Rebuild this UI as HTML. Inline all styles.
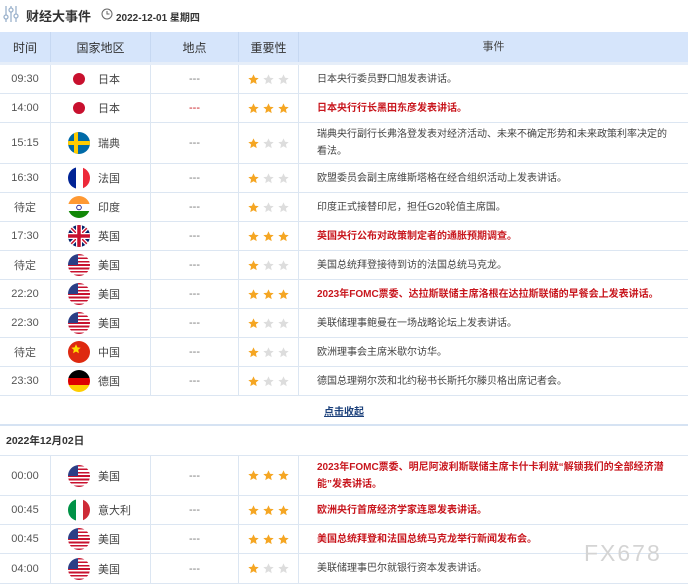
<!DOCTYPE html>
<html><head><meta charset="utf-8"><style>
*{margin:0;padding:0;box-sizing:border-box}
body{width:688px;height:584px;overflow:hidden;background:#fff;font-family:"Liberation Sans","Noto Sans CJK SC",sans-serif;color:#444;position:relative}
.top{position:absolute;left:0;top:0;width:688px;height:32px}
.title{position:absolute;left:26px;top:6px;font-size:13px;font-weight:bold;color:#333}
.date{position:absolute;left:116px;top:9px;font-size:10px;font-weight:bold;color:#333}
.r{position:absolute;left:0;width:688px;border-bottom:1px solid #dce6f2;font-size:11px}
.r>div{position:absolute;top:0;height:100%;display:flex;align-items:center}
.c1{left:0;width:50px;justify-content:center;color:#555}
.c2{left:50px;width:100px;border-left:1px solid #dce6f2}
.c3{left:150px;width:88px;justify-content:center;border-left:1px solid #dce6f2;color:#777}
.c4{left:238px;width:60px;justify-content:center;border-left:1px solid #dce6f2}
.c4 svg{margin:0 2px}
.c5{left:298px;width:390px;border-left:1px solid #dce6f2;padding-left:18px;padding-right:14px;font-size:10px;line-height:17px;color:#444}
.red{color:#c8161d!important;font-weight:bold}
.flag{width:22px;height:22px;border-radius:50%;overflow:hidden;margin-left:17px;margin-right:8px;flex:none}
.hd{background:#d6e5fb;border-bottom:3px solid #e6eef9;color:#333;font-size:12px}
.hd>div{border-left-color:#c6d8f2!important;justify-content:center!important;padding:0!important}
.us{background:linear-gradient(#2b3e86,#2b3e86) 0 0/10px 11px no-repeat,repeating-linear-gradient(#c8102e 0 1.7px,#fff 1.7px 3.4px)}
</style></head><body>
<svg width="0" height="0" style="position:absolute"><defs><path id="st" d="M5 0.3L6.4 3.4L9.7 3.7L7.2 5.9L7.9 9.2L5 7.5L2.1 9.2L2.8 5.9L0.3 3.7L3.6 3.4Z"/></defs></svg>
<div class="top">
<svg style="position:absolute;left:3px;top:5px" width="16" height="18" viewBox="0 0 16 18" fill="none" stroke="#9bb2cc" stroke-width="1.3"><line x1="3" y1="1" x2="3" y2="17"/><line x1="8" y1="1" x2="8" y2="17"/><line x1="13" y1="1" x2="13" y2="17"/><circle cx="3" cy="12" r="2" fill="#fff"/><circle cx="8" cy="5" r="2" fill="#fff"/><circle cx="13" cy="11" r="2" fill="#fff"/></svg>
<div class="title">财经大事件</div>
<svg style="position:absolute;left:101px;top:8px" width="12" height="12" viewBox="0 0 12 12" fill="none" stroke="#666" stroke-width="1"><circle cx="6" cy="6" r="5"/><path d="M6 3v3h2.5"/></svg>
<div class="date">2022-12-01 星期四</div>
</div>

<div class="r hd" style="top:32px;height:33px"><div class="c1" style="color:#333">时间</div><div class="c2">国家地区</div><div class="c3" style="color:#333">地点</div><div class="c4">重要性</div><div class="c5" style="font-size:11px">事件</div></div>

<div class="r" style="top:65px;height:29px"><div class="c1">09:30</div><div class="c2"><div class="flag"><svg width="22" height="22"><circle cx="11" cy="11" r="6" fill="#c8102e"/></svg></div>日本</div><div class="c3">---</div><div class="c4 s1"></div><div class="c5">日本央行委员野口旭发表讲话。</div></div>
<div class="r" style="top:94px;height:29px"><div class="c1">14:00</div><div class="c2"><div class="flag"><svg width="22" height="22"><circle cx="11" cy="11" r="6" fill="#c8102e"/></svg></div>日本</div><div class="c3" style="color:#c8161d">---</div><div class="c4 s3"></div><div class="c5 red">日本央行行长黑田东彦发表讲话。</div></div>
<div class="r" style="top:123px;height:41px"><div class="c1">15:15</div><div class="c2"><div class="flag"><svg width="22" height="22"><rect width="22" height="22" fill="#006aa7"/><rect x="6" width="4" height="22" fill="#fecc00"/><rect y="9" width="22" height="4" fill="#fecc00"/></svg></div>瑞典</div><div class="c3">---</div><div class="c4 s1"></div><div class="c5">瑞典央行副行长弗洛登发表对经济活动、未来不确定形势和未来政策利率决定的看法。</div></div>
<div class="r" style="top:164px;height:29px"><div class="c1">16:30</div><div class="c2"><div class="flag"><svg width="22" height="22"><rect width="8" height="22" fill="#002395"/><rect x="8" width="7" height="22" fill="#fff"/><rect x="15" width="7" height="22" fill="#ed2939"/></svg></div>法国</div><div class="c3">---</div><div class="c4 s1"></div><div class="c5">欧盟委员会副主席维斯塔格在经合组织活动上发表讲话。</div></div>
<div class="r" style="top:193px;height:29px"><div class="c1">待定</div><div class="c2"><div class="flag"><svg width="22" height="22"><rect width="22" height="8" fill="#f93"/><rect y="8" width="22" height="7" fill="#fff"/><rect y="15" width="22" height="7" fill="#128807"/><circle cx="11" cy="11.5" r="2.3" fill="none" stroke="#008" stroke-width=".8"/></svg></div>印度</div><div class="c3">---</div><div class="c4 s1"></div><div class="c5">印度正式接替印尼，担任G20轮值主席国。</div></div>
<div class="r" style="top:222px;height:29px"><div class="c1">17:30</div><div class="c2"><div class="flag"><svg width="22" height="22"><rect width="22" height="22" fill="#012169"/><path d="M0 0L22 22M22 0L0 22" stroke="#fff" stroke-width="4"/><path d="M0 0L22 22M22 0L0 22" stroke="#c8102e" stroke-width="1.5"/><path d="M11 0v22M0 11h22" stroke="#fff" stroke-width="6"/><path d="M11 0v22M0 11h22" stroke="#c8102e" stroke-width="3.5"/></svg></div>英国</div><div class="c3">---</div><div class="c4 s3"></div><div class="c5 red">英国央行公布对政策制定者的通胀预期调查。</div></div>
<div class="r" style="top:251px;height:29px"><div class="c1">待定</div><div class="c2"><div class="flag us"></div>美国</div><div class="c3">---</div><div class="c4 s1"></div><div class="c5">美国总统拜登接待到访的法国总统马克龙。</div></div>
<div class="r" style="top:280px;height:29px"><div class="c1">22:20</div><div class="c2"><div class="flag us"></div>美国</div><div class="c3">---</div><div class="c4 s3"></div><div class="c5 red">2023年FOMC票委、达拉斯联储主席洛根在达拉斯联储的早餐会上发表讲话。</div></div>
<div class="r" style="top:309px;height:29px"><div class="c1">22:30</div><div class="c2"><div class="flag us"></div>美国</div><div class="c3">---</div><div class="c4 s1"></div><div class="c5">美联储理事鲍曼在一场战略论坛上发表讲话。</div></div>
<div class="r" style="top:338px;height:29px"><div class="c1">待定</div><div class="c2"><div class="flag"><svg width="22" height="22"><rect width="22" height="22" fill="#de2910"/><use href="#st" x="3" y="3" fill="#ffde00"/></svg></div>中国</div><div class="c3">---</div><div class="c4 s1"></div><div class="c5">欧洲理事会主席米歇尔访华。</div></div>
<div class="r" style="top:367px;height:29px"><div class="c1">23:30</div><div class="c2"><div class="flag"><svg width="22" height="22"><rect width="22" height="8" fill="#000"/><rect y="8" width="22" height="7" fill="#dd0000"/><rect y="15" width="22" height="7" fill="#ffce00"/></svg></div>德国</div><div class="c3">---</div><div class="c4 s1"></div><div class="c5">德国总理朔尔茨和北约秘书长斯托尔滕贝格出席记者会。</div></div>
<div class="r" style="top:396px;height:30px;border-bottom:2px solid #d6e3f3"><div style="left:0;width:688px;justify-content:center;font-size:10px;color:#1a3f7a;text-decoration:underline;font-weight:bold">点击收起</div></div>
<div class="r" style="top:426px;height:30px"><div style="left:6px;font-size:10.5px;font-weight:bold;color:#333">2022年12月02日</div></div>
<div class="r" style="top:456px;height:40px"><div class="c1">00:00</div><div class="c2"><div class="flag us"></div>美国</div><div class="c3">---</div><div class="c4 s3"></div><div class="c5 red">2023年FOMC票委、明尼阿波利斯联储主席卡什卡利就“解锁我们的全部经济潜能”发表讲话。</div></div>
<div class="r" style="top:496px;height:29px"><div class="c1">00:45</div><div class="c2"><div class="flag"><svg width="22" height="22"><rect width="8" height="22" fill="#009246"/><rect x="8" width="7" height="22" fill="#fff"/><rect x="15" width="7" height="22" fill="#ce2b37"/></svg></div>意大利</div><div class="c3">---</div><div class="c4 s3"></div><div class="c5 red">欧洲央行首席经济学家连恩发表讲话。</div></div>
<div class="r" style="top:525px;height:29px"><div class="c1">00:45</div><div class="c2"><div class="flag us"></div>美国</div><div class="c3">---</div><div class="c4 s3"></div><div class="c5 red">美国总统拜登和法国总统马克龙举行新闻发布会。</div></div>
<div class="r" style="top:554px;height:30px"><div class="c1">04:00</div><div class="c2"><div class="flag us"></div>美国</div><div class="c3">---</div><div class="c4 s1"></div><div class="c5">美联储理事巴尔就银行资本发表讲话。</div></div>
<div style="position:absolute;left:584px;top:540px;font-size:23px;color:#d4d4d4;letter-spacing:2px;font-family:'Liberation Sans',sans-serif">FX678</div>
<script>
var g='<svg width="11" height="11" viewBox="0 0 10 10"><use href="#st" fill="#f5a623"/></svg>',s='<svg width="11" height="11" viewBox="0 0 10 10"><use href="#st" fill="#ddd"/></svg>';
document.querySelectorAll('.s1').forEach(e=>e.innerHTML=g+s+s);
document.querySelectorAll('.s3').forEach(e=>e.innerHTML=g+g+g);
</script>
</body></html>
